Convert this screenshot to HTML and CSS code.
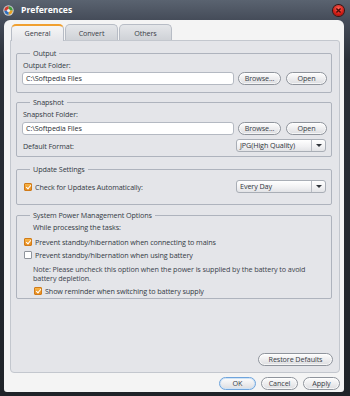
FILE: index.html
```html
<!DOCTYPE html>
<html lang="en">

<head>
    <meta charset="UTF-8">
    <title>Preferences</title>
    <link rel="stylesheet" href="styles.css">
</head>

<body>
    <div class="window">
        <div class="titlebar">
            <svg class="app-icon" width="11" height="11" viewBox="0 0 11 11">
                <circle cx="5.5" cy="5.5" r="5.2" fill="#c9ccd1"/>
                <path d="M5.5 5.5 L5.5 1.3 A4.2 4.2 0 0 1 9.7 5.5 Z" fill="#3f9b3a"/>
                <path d="M5.5 5.5 L9.7 5.5 A4.2 4.2 0 0 1 5.5 9.7 Z" fill="#e8a020"/>
                <path d="M5.5 5.5 L5.5 9.7 A4.2 4.2 0 0 1 1.3 5.5 Z" fill="#2f6fc0"/>
                <path d="M5.5 5.5 L1.3 5.5 A4.2 4.2 0 0 1 5.5 1.3 Z" fill="#d23a2a"/>
                <circle cx="5.5" cy="5.5" r="1.6" fill="#eef0f2"/>
            </svg>
            <span class="title">Preferences</span>
            <span class="close-btn">
                <svg width="11" height="11" viewBox="0 0 11 11">
                    <path d="M3.4 3.4 L7.6 7.6 M7.6 3.4 L3.4 7.6" stroke="#4a0b08" stroke-width="1.4"/>
                </svg>
            </span>
        </div>

        <div class="client">
            <div class="tabs">
                <div class="tab active">General</div>
                <div class="tab">Convert</div>
                <div class="tab">Others</div>
            </div>

            <div class="panel">
                <fieldset class="group group-output">
                    <legend>Output</legend>
                    <div class="label">Output Folder:</div>
                    <div class="path-row">
                        <div class="textbox">C:\Softpedia Files</div>
                        <button class="btn btn-browse">Browse...</button>
                        <button class="btn btn-open">Open</button>
                    </div>
                </fieldset>

                <fieldset class="group group-snapshot">
                    <legend>Snapshot</legend>
                    <div class="label">Snapshot Folder:</div>
                    <div class="path-row">
                        <div class="textbox">C:\Softpedia Files</div>
                        <button class="btn btn-browse">Browse...</button>
                        <button class="btn btn-open">Open</button>
                    </div>
                    <div class="option-row format-row">
                        <span>Default Format:</span>
                        <div class="combo">
                            <span class="combo-text">JPG(High Quality)</span>
                            <span class="combo-arrow"></span>
                        </div>
                    </div>
                </fieldset>

                <fieldset class="group group-update">
                    <legend>Update Settings</legend>
                    <div class="option-row">
                        <label class="check"><span class="box checked"></span>Check for Updates Automatically:</label>
                        <div class="combo">
                            <span class="combo-text">Every Day</span>
                            <span class="combo-arrow"></span>
                        </div>
                    </div>
                </fieldset>

                <fieldset class="group group-power">
                    <legend>System Power Management Options</legend>
                    <div class="indent">While processing the tasks:</div>
                    <label class="check check-mains"><span class="box checked"></span>Prevent standby/hibernation when connecting to mains</label>
                    <label class="check check-battery"><span class="box"></span>Prevent standby/hibernation when using battery</label>
                    <div class="note indent">Note: Please uncheck this option when the power is supplied by the battery to avoid battery depletion.</div>
                    <label class="check check-reminder indent"><span class="box checked"></span>Show reminder when switching to battery supply</label>
                </fieldset>

                <div class="panel-footer">
                    <button class="btn btn-restore">Restore Defaults</button>
                </div>
            </div>

            <div class="dialog-buttons">
                <button class="btn btn-ok">OK</button>
                <button class="btn btn-cancel">Cancel</button>
                <button class="btn btn-apply">Apply</button>
            </div>
        </div>
    </div>
</body>

</html>
```

FILE: styles.css
```css
/* Global Reset */
* {
    box-sizing: border-box;
    margin: 0;
    padding: 0;
}

body {
    font-family: "Open Sans", sans-serif;
    font-size: 7.2px;
    letter-spacing: -0.1px;
    color: #333a44;
    background-color: #23272e;
    width: 350px;
    height: 396px;
    overflow: hidden;
}

.window {
    display: flex;
    flex-direction: column;
    height: 396px;
    background: linear-gradient(#5a6370 0px, #454c59 20px, #2b3038 60px, #1f2328 100%);
}

/* Title bar */
.titlebar {
    height: 20px;
    display: flex;
    align-items: center;
    padding: 0 6px 0 3px;
}

.app-icon {
    margin-right: 7px;
}

.title {
    color: #fff;
    font-weight: bold;
    font-size: 8.6px;
    letter-spacing: 0;
    flex: 1;
}

.close-btn {
    width: 11px;
    height: 11px;
    border-radius: 50%;
    background: radial-gradient(circle at 50% 35%, #ff6a5c, #d01a12 60%, #8a0a06);
    box-shadow: 0 0 0 1px #3a1210;
    display: flex;
}

/* Client area */
.client {
    flex: 1;
    margin: 0 6px 4px 4px;
    background-color: #f4f4f4;
    border-radius: 6px 6px 3px 3px;
    padding: 4px 4px 2px 6px;
    display: flex;
    flex-direction: column;
}

.tabs {
    display: flex;
    height: 16px;
    gap: 1px;
    padding-left: 1px;
}

.tab {
    width: 53px;
    text-align: center;
    line-height: 14px;
    padding-top: 1px;
    border: 1px solid #b7bcc5;
    border-bottom: none;
    border-radius: 5px 5px 0 0;
    background: linear-gradient(#e4e6e9, #cfd2d7);
    color: #3a4048;
}

.tab.active {
    border-top: 2px solid #f0a030;
    padding-top: 0;
    background: linear-gradient(#f6f6f6, #e4e5e9);
    position: relative;
    height: 17px;
    z-index: 1;
}

.panel {
    flex: 1;
    background-color: #e4e5e9;
    border: 1px solid #c3c7ce;
    border-radius: 0 3px 4px 4px;
    padding: 0 7px 6px 5px;
    display: flex;
    flex-direction: column;
}

/* Group boxes */
.group {
    border: 1px solid #aeb3bd;
    border-radius: 2px;
    padding: 0 4px 7px 6px;
    min-width: 0;
}

.group legend {
    line-height: 12px;
    padding: 0 3px;
    margin-left: 7px;
}

.group-output {
    margin-top: 6px;
}

.group-snapshot {
    margin-top: 3px;
    padding-bottom: 4px;
}

.group-update {
    margin-top: 6px;
    padding-bottom: 11px;
}

.group-power {
    margin-top: 4px;
    padding-bottom: 1px;
}

.label {
    line-height: 12px;
}

.path-row {
    display: flex;
    align-items: center;
    margin-top: 1px;
    height: 13px;
}

.group-snapshot .path-row {
    margin-top: 2px;
}

.textbox {
    width: 212px;
    height: 13px;
    margin-left: -1px;
    background: #fff;
    border: 1px solid #b4b9c2;
    border-radius: 3px;
    line-height: 11px;
    padding-left: 3px;
    color: #2b2f36;
}

.btn {
    font-family: "Open Sans", sans-serif;
    font-size: 7.2px;
    letter-spacing: -0.1px;
    color: #3a3f47;
    height: 13px;
    line-height: 11px;
    border: 1px solid #8f949c;
    border-radius: 7px;
    background: linear-gradient(#fdfdfd, #ececee 55%, #dcdde0);
    box-shadow: inset 0 0 0 1px rgba(255, 255, 255, 0.7);
}

.btn-browse {
    width: 43px;
    margin-left: 4px;
}

.btn-open {
    width: 41px;
    margin-left: 5px;
}

.option-row {
    display: flex;
    align-items: center;
    justify-content: space-between;
    height: 13px;
    padding-right: 1px;
}

.format-row {
    margin-top: 4px;
}

.group-update .option-row {
    margin-top: 5px;
}

.combo {
    width: 90px;
    height: 13px;
    display: flex;
    border: 1px solid #a9aeb6;
    border-radius: 3px;
    background: linear-gradient(#ffffff, #f0f0f2 60%, #e2e3e6);
}

.combo-text {
    flex: 1;
    line-height: 11px;
    padding-left: 3px;
    color: #2f343b;
}

.combo-arrow {
    width: 14px;
    border-left: 1px solid #b7bbc2;
    display: flex;
    align-items: center;
    justify-content: center;
}

.combo-arrow::after {
    content: "";
    border-left: 3px solid transparent;
    border-right: 3px solid transparent;
    border-top: 3px solid #30343a;
}

/* Check boxes */
.check {
    display: flex;
    align-items: center;
    line-height: 12px;
}

.box {
    width: 8px;
    height: 8px;
    margin: 0 3px 0 1px;
    border: 1px solid #8f949c;
    border-radius: 1px;
    background: #fff;
}

.box.checked {
    border-color: #d07a18;
    background: linear-gradient(#f7b548, #e78a1c);
    position: relative;
}

.box.checked::after {
    content: "";
    position: absolute;
    left: 1.5px;
    top: 0;
    width: 2px;
    height: 4px;
    border: solid #fff;
    border-width: 0 1.2px 1.2px 0;
    transform: rotate(40deg);
}

.indent {
    padding-left: 10px;
    line-height: 12px;
}

.check-mains {
    margin-top: 3px;
}

.check-battery {
    margin-top: 1px;
}

.note {
    margin-top: 4px;
    line-height: 9px;
    padding-right: 10px;
    color: #3c434d;
}

.check-reminder {
    margin-top: 2px;
}

.panel-footer {
    margin-top: auto;
    display: flex;
    justify-content: flex-end;
    margin-right: -1px;
}

.btn-restore {
    width: 75px;
}

.dialog-buttons {
    display: flex;
    justify-content: flex-end;
    gap: 5px;
    margin-top: 4px;
}

.dialog-buttons .btn {
    width: 37px;
}

.btn-ok {
    border-color: #6fa4dc;
    box-shadow: inset 0 0 0 1px #cfe3f6;
}
```
